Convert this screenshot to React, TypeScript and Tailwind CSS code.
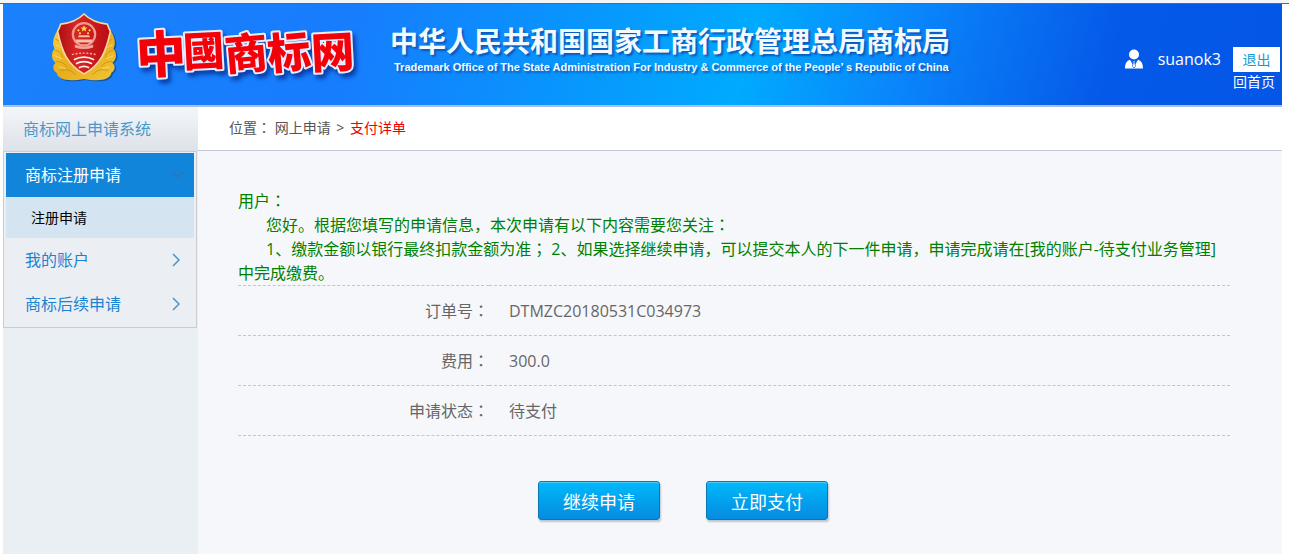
import React from "react";

const P = ({ children }: { children: React.ReactNode }) => (
  <span className="font-['Noto_Sans_CJK_TC',sans-serif] leading-none">{children}</span>
);

function Emblem() {
  const leaf = "M8 17C3 23 1 31 4 36C0 41 1 47 5 50C1 54 3 58 6 60C7 67 18 69 33 66C48 69 59 67 60 60C63 58 65 54 61 50C65 47 66 41 62 36C65 31 63 23 58 17Z";
  return (
    <svg viewBox="0 0 66 69" className="h-[70px] w-[68px] shrink-0" role="img" aria-label="工商徽标">
      <defs>
        <linearGradient id="gold" x1="0" y1="0" x2="1" y2="1">
          <stop offset="0" stopColor="#f4cf3d" />
          <stop offset="0.5" stopColor="#e8ad1c" />
          <stop offset="1" stopColor="#f1c63a" />
        </linearGradient>
        <linearGradient id="shield" x1="0" y1="0" x2="1" y2="0">
          <stop offset="0" stopColor="#a90f15" />
          <stop offset="0.35" stopColor="#d92525" />
          <stop offset="1" stopColor="#b90d14" />
        </linearGradient>
      </defs>
      <path d={leaf} fill="#0b3a6b" opacity="0.6" transform="translate(1.5 1)" />
      <path d={leaf} fill="url(#gold)" />
      <g fill="none" stroke="#c98f14" strokeWidth="0.8">
        <path d="M5 27q6 1 5 8M4 38q7 0 8 7M5 49q7-1 11 5M9 58q8-4 16 4M61 27q-6 1-5 8M62 38q-7 0-8 7M61 49q-7-1-11 5M57 58q-8-4-16 4" />
        <path d="M5 32l5 3M4 43l7 3M8 54l7 2M61 32l-5 3M62 43l-7 3M58 54l-7 2" stroke="#fae27a" />
      </g>
      <path d="M33 2C27 8 20 11 10 12C9 15 8 17 7 19C11 38 16 52 33 61C50 52 55 38 59 19C58 17 57 15 56 12C46 11 39 8 33 2Z" fill="url(#shield)" stroke="#f7d8a0" strokeWidth="1.6" />
      <circle cx="33" cy="22" r="11" fill="none" stroke="#ef9a8c" strokeWidth="2.2" />
      <path d="M33 13l1 2.2 2.4.2-1.8 1.6.5 2.3-2.1-1.2-2.1 1.2.5-2.3-1.8-1.6 2.4-.2Z" fill="#ffd94a" />
      <g fill="#ffd94a">
        <circle cx="27.5" cy="18" r="1.1" /><circle cx="38.5" cy="18" r="1.1" />
        <circle cx="29" cy="21" r="1.1" /><circle cx="37" cy="21" r="1.1" />
      </g>
      <path d="M27 25h12l-1-2H28ZM25 27h16v3H25Z" fill="#f6bfa8" />
      <path d="M24 32q9 4 18 0v3q-9 3-18 0Z" fill="#efa69a" />
      <path d="M21 42q12-3 24 0" fill="none" stroke="#f2b3a0" strokeWidth="1.4" strokeDasharray="2 1.6" />
      <path d="M23 47q10-5 20 0M25 51q8-4 16 0M28 55q5-3 10 0" fill="none" stroke="#fff1ea" strokeWidth="1.7" />
    </svg>
  );
}

function Wordmark() {
  return (
    <svg viewBox="0 0 236 84" className="h-[84px] w-[236px] shrink-0 drop-shadow-[3px_4px_2px_#0a3fa8]" role="img" aria-label="中國商标网">
      <g
        fill="#f30008"
        stroke="#e6eeff"
        strokeWidth="4"
        strokeLinejoin="round"
        paintOrder="stroke"
        className="font-['Noto_Sans_CJK_SC',sans-serif] font-black"
      >
        <text x="3" y="62" fontSize="50" rotate="-3">中</text>
        <text x="50" y="55" fontSize="41" rotate="-3">國</text>
        <text x="92" y="59" fontSize="43" rotate="-5">商</text>
        <text x="135" y="58" fontSize="43" rotate="-5">标</text>
        <text x="178" y="57" fontSize="43" rotate="-3">网</text>
      </g>
    </svg>
  );
}

function UserIcon() {
  return (
    <svg viewBox="0 0 18 20" className="h-5 w-[18px]" fill="#fff" aria-hidden="true">
      <circle cx="9" cy="5.500" r="5" />
      <path d="M0 19.500C0 14 2 11.500 5 10.700L9 17.500L13 10.700C16 11.500 18 14 18 19.500Z" />
      <path d="M7.600 12h2.800l-.7 1.600.9 3.700L9 19l-1.600-1.700.9-3.700Z" stroke="#0558e6" strokeWidth="0.7" />
    </svg>
  );
}

function Chevron() {
  return (
    <svg viewBox="0 0 8 14" className="h-3.5 w-2" fill="none" stroke="#4c93c9" strokeWidth="1.5" aria-hidden="true">
      <path d="M1 1l6 6-6 6" />
    </svg>
  );
}

const rows = [
  ["订单号", "DTMZC20180531C034973"],
  ["费用", "300.0"],
  ["申请状态", "待支付"],
];

function Action({ children }: { children: string }) {
  return (
    <button
      type="button"
      className="h-[39px] w-[122px] rounded-[3px] border border-[#0879b5] bg-linear-to-b from-[#00b9fb] to-[#078be0] pt-0.5 text-lg leading-none text-white shadow-[inset_0_1px_0_#45cdfc,1px_2px_2px_#b9c5cf]"
    >
      {children}
    </button>
  );
}

export default function App() {
  return (
    <div className="min-h-screen bg-white font-['Open_Sans','Noto_Sans_CJK_SC',sans-serif] text-base text-[#666]">
      <div className="h-[3px] bg-[#f4f5f7]" />
      <div className="border-t border-[#5d6b70] pr-[7px] pl-[3px]">
        <header className="flex h-[103px] items-start border-b-2 border-[#a9bfe9] bg-[linear-gradient(105deg,#1a80fb_0%,#177dfd_27%,#0a92fd_42%,#00aafe_58%,#0a86fb_70%,#0559e8_86%,#0457e6_100%)]">
          <div className="flex items-start pt-2 pl-[47px]">
            <Emblem />
            <div className="pl-4"><Wordmark /></div>
          </div>
          <div className="pt-5 pl-5 whitespace-nowrap text-[#f2faff] [text-shadow:2px_2px_2px_#0d56b8]">
            <h1 className="font-['Noto_Sans_CJK_SC',sans-serif] text-[28px] leading-8 font-bold">中华人民共和国国家工商行政管理总局商标局</h1>
            <p className="pl-1 font-['Liberation_Sans',sans-serif] text-[11px] leading-[22px] font-bold">
              Trademark Office of The State Administration For Industry &amp; Commerce of the People’ s Republic of China
            </p>
          </div>
          <div className="ml-auto flex items-start pr-0.5 text-white">
            <div className="flex items-center gap-[15px] pt-[43px]">
              <UserIcon />
              <span className="leading-6">suanok3</span>
            </div>
            <div className="flex flex-col items-start pt-[43px] pl-3 text-sm">
              <button type="button" className="h-[25px] w-[47px] bg-white leading-[25px] text-[#1697d5]">退出</button>
              <a href="#home" className="leading-5">回首页</a>
            </div>
          </div>
        </header>

        <div className="flex min-h-[447px]">
          <aside className="w-[195px] shrink-0 bg-[#e9eff3]">
            <h2 className="h-11 bg-linear-to-b from-[#f3f6f9] to-[#dde2e9] pl-5 leading-[44px] text-[#4a98cb]">商标网上申请系统</h2>
            <nav className="mr-px border border-[#c9cdd0] bg-[#ebeff3] px-0.5 py-px text-[#1c83d0]">
              <a href="#register" className="flex h-11 items-center justify-between bg-[#1085d9] pr-2.5 pl-[19px] text-white">
                商标注册申请
                <svg viewBox="0 0 12 8" className="h-2 w-3" fill="none" stroke="#2b76b3" strokeWidth="1.5" aria-hidden="true"><path d="M1 1l5 5 5-5" /></svg>
              </a>
              <a href="#new" className="block h-[41px] bg-[#d4e5f1] pl-[25px] text-sm leading-[41px] text-black">注册申请</a>
              <a href="#account" className="flex h-11 items-center justify-between pr-3.5 pl-[19px]">我的账户<Chevron /></a>
              <a href="#later" className="flex h-11 items-center justify-between pr-3.5 pl-[19px]">商标后续申请<Chevron /></a>
            </nav>
          </aside>

          <main className="min-w-0 flex-1 bg-[#f6f7fa]">
            <div className="h-11 border-b border-[#c4c9d9] bg-white pl-[31px] text-sm leading-[42px] text-[#555]">
              位置<P>：</P> 网上申请 <span className="px-0.5">&gt;</span> <span className="text-[#f00000]">支付详单</span>
            </div>
            <div className="pt-[38px] pr-[52px] pl-10">
              <div className="leading-6 text-[#008000]">
                <p>用户<P>：</P></p>
                <p className="indent-7">您好。根据您填写的申请信息，本次申请有以下内容需要您关注<P>：</P></p>
                <p className="indent-7">1、缴款金额以银行最终扣款金额为准<P>；</P> 2、如果选择继续申请，可以提交本人的下一件申请，申请完成请在[我的账户-待支付业务管理]中完成缴费。</p>
              </div>
              <table className="w-full border-collapse border-t border-dashed border-[#c2c5c9]">
                <tbody>
                  {rows.map(([label, value]) => (
                    <tr key={label} className="h-[50px] border-b border-dashed border-[#c2c5c9]">
                      <th scope="row" className="w-[251px] text-right font-normal">{label}<P>：</P></th>
                      <td className="pl-5">{value}</td>
                    </tr>
                  ))}
                </tbody>
              </table>
              <div className="flex gap-[46px] pt-[45px] pl-[300px]">
                <Action>继续申请</Action>
                <Action>立即支付</Action>
              </div>
            </div>
          </main>
        </div>
      </div>
    </div>
  );
}
